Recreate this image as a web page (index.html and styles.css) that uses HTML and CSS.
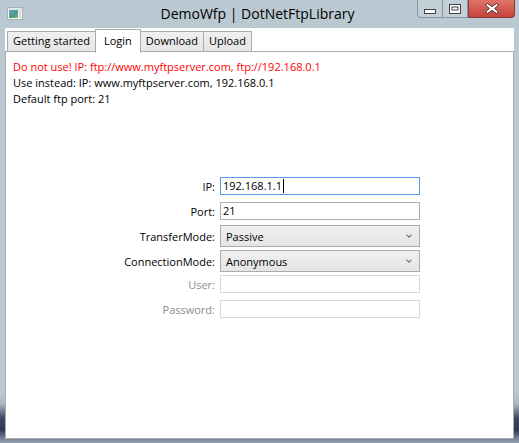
FILE: index.html
```html
<!DOCTYPE html>
<html>
<head>
<meta charset="utf-8">
<link rel="stylesheet" href="styles.css">
</head>
<body>
<div class="window">
  <div class="titlebar">
    <div class="tb-left">
      <svg class="app-icon" width="16" height="13" viewBox="0 0 16 13">
        <rect x="0.5" y="0.5" width="15" height="12" fill="#f4f6f7" stroke="#a7b0b5"/>
        <rect x="1" y="1" width="14" height="2" fill="#dfe5e8"/>
        <defs>
          <linearGradient id="ig" x1="0" y1="0" x2="1" y2="1">
            <stop offset="0" stop-color="#6aa3c9"/>
            <stop offset="0.6" stop-color="#4d9a7c"/>
            <stop offset="1" stop-color="#8fbf6a"/>
          </linearGradient>
        </defs>
        <rect x="2" y="3" width="9" height="8" fill="url(#ig)"/>
        <rect x="12" y="3" width="2" height="8" fill="#d3dade"/>
      </svg>
    </div>
    <div class="title">DemoWfp | DotNetFtpLibrary</div>
    <div class="tb-right">
      <div class="wbtn wbtn-min">
        <svg width="12" height="6" viewBox="0 0 12 6"><rect x="0.5" y="1.5" width="11" height="4" fill="#fff" stroke="#3c4248"/></svg>
      </div>
      <div class="wbtn wbtn-max">
        <svg width="12" height="10" viewBox="0 0 12 10"><rect x="0.5" y="0.5" width="11" height="9" fill="#fff" stroke="#3c4248"/><rect x="3" y="3" width="6" height="3" fill="#fff" stroke="#3c4248"/></svg>
      </div>
      <div class="wbtn wbtn-close">
        <svg width="14" height="11" viewBox="0 0 14 11"><path d="M2.5 0.5 L7 3.6 L11.5 0.5 L13.5 2.2 L9.6 5.5 L13.5 8.8 L11.5 10.5 L7 7.4 L2.5 10.5 L0.5 8.8 L4.4 5.5 L0.5 2.2 Z" fill="#fff" stroke="#4a2a28" stroke-width="1"/></svg>
      </div>
    </div>
  </div>
  <div class="client">
    <div class="tabstrip">
      <div class="tab">Getting started</div>
      <div class="tab selected">Login</div>
      <div class="tab">Download</div>
      <div class="tab">Upload</div>
    </div>
    <div class="panel">
      <div class="info">
        <div class="warn">Do not use! IP: ftp://www.myftpserver.com, ftp://192.168.0.1</div>
        <div>Use instead: IP: www.myftpserver.com, 192.168.0.1</div>
        <div>Default ftp port: 21</div>
      </div>
      <div class="form">
        <div class="row">
          <div class="label">IP:</div>
          <div class="textbox focused"><span>192.168.1.1</span><span class="caret"></span></div>
        </div>
        <div class="row gap7">
          <div class="label">Port:</div>
          <div class="textbox"><span>21</span></div>
        </div>
        <div class="row gap5">
          <div class="label">TransferMode:</div>
          <div class="combo"><span>Passive</span>
            <svg class="chev" width="6" height="4" viewBox="0 0 6 4"><path d="M0.5 0.6 L3 3.1 L5.5 0.6" fill="none" stroke="#707070" stroke-width="1.1"/></svg>
          </div>
        </div>
        <div class="row gap3">
          <div class="label">ConnectionMode:</div>
          <div class="combo"><span>Anonymous</span>
            <svg class="chev" width="6" height="4" viewBox="0 0 6 4"><path d="M0.5 0.6 L3 3.1 L5.5 0.6" fill="none" stroke="#707070" stroke-width="1.1"/></svg>
          </div>
        </div>
        <div class="row gap3">
          <div class="label disabled">User:</div>
          <div class="textbox disabled"></div>
        </div>
        <div class="row gap7">
          <div class="label disabled">Password:</div>
          <div class="textbox disabled"></div>
        </div>
      </div>
    </div>
  </div>
</div>
</body>
</html>
```

FILE: styles.css
```css
* { box-sizing: border-box; }
html, body { margin: 0; padding: 0; }
body {
  width: 519px;
  height: 443px;
  overflow: hidden;
  font-family: "Open Sans", "Noto Sans", sans-serif;
  font-size: 11px;
  color: #000;
}
.window {
  width: 519px;
  height: 443px;
  background: linear-gradient(to bottom, #bac9d1 0, #bac9d1 392px, #a9b8c2 404px, #3a4862 418px, #2e3b56 430px, #6f8096 438px, #95a3b0 443px);
  display: flex;
  flex-direction: column;
}
.titlebar {
  height: 28px;
  display: grid;
  grid-template-columns: 1fr auto 1fr;
  align-items: start;
  padding-right: 4px;
  background: #bac9d1;
}
.tb-left {
  padding: 7px 0 0 7px;
}
.app-icon { display: block; }
.title {
  font-size: 14px;
  line-height: 27px;
  color: #000;
}
.tb-right {
  display: flex;
  justify-content: flex-end;
}
.wbtn {
  height: 18px;
  display: flex;
  align-items: center;
  justify-content: center;
}
.wbtn-min, .wbtn-max {
  width: 26px;
  background: #c3d0d7;
  border: 1px solid #8796a0;
  border-top: none;
  margin-right: -1px;
}
.wbtn-min { border-radius: 0 0 0 4px; }
.wbtn-min svg { margin-top: 4px; }
.wbtn-close {
  width: 47px;
  margin-left: 1px;
  background: linear-gradient(#e0746a, #c7433a);
  border: 1px solid #8a3a34;
  border-top: none;
  border-radius: 0 0 4px 0;
}
.client {
  flex: 1;
  margin: 0 5px 4px 5px;
  background: #fff;
  display: flex;
  flex-direction: column;
}
.tabstrip {
  display: flex;
  align-items: flex-end;
  padding: 1px 2px 0 2px;
  height: 23px;
}
.tab {
  position: relative;
  z-index: 1;
  height: 20px;
  padding: 0 5px;
  line-height: 18px;
  border: 1px solid #acacac;
  border-bottom: none;
  background: linear-gradient(#f0f0f0, #e5e5e5);
  margin-right: -1px;
  white-space: nowrap;
}
.tab.selected {
  height: 24px;
  margin-bottom: -2px;
  padding: 0 8px;
  background: #fff;
  line-height: 21px;
  z-index: 2;
}
.panel {
  flex: 1;
  border: 1px solid #acacac;
  padding: 7px 7px;
}
.info div {
  line-height: 16px;
  height: 16px;
  white-space: nowrap;
}
.info .warn { color: #ff0000; }
.form {
  margin-top: 70px;
  display: flex;
  flex-direction: column;
}
.row {
  display: grid;
  grid-template-columns: 202px 200px;
  column-gap: 5px;
  align-items: center;
}
.row.gap7 { margin-top: 7px; }
.row.gap5 { margin-top: 5px; }
.row.gap3 { margin-top: 3px; }
.label {
  text-align: right;
  white-space: nowrap;
}
.label.disabled { color: #8c8c8c; }
.textbox {
  height: 18px;
  border: 1px solid #abadb3;
  background: #fff;
  padding-left: 2px;
  line-height: 16px;
  display: flex;
  align-items: center;
}
.textbox.focused { border-color: #569de5; }
.textbox.disabled { border-color: #d9d9d9; }
.caret {
  display: inline-block;
  width: 1px;
  height: 14px;
  background: #000;
  margin-left: 1px;
}
.combo {
  height: 22px;
  border: 1px solid #acacac;
  background: linear-gradient(#f0f0f0, #e5e5e5);
  padding: 0 7px 0 5px;
  display: flex;
  align-items: center;
  justify-content: space-between;
}
.chev { display: block; }
```
